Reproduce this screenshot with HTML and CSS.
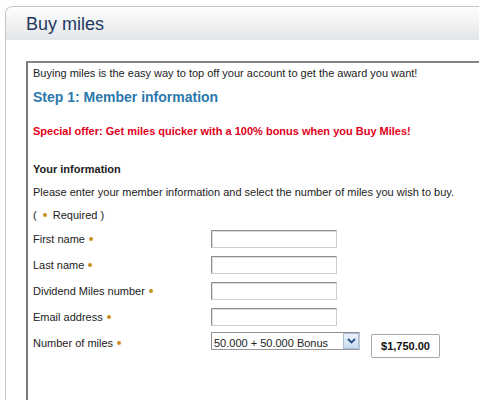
FILE: index.html
```html
<!DOCTYPE html>
<html>
<head>
<meta charset="utf-8">
<link rel="stylesheet" href="styles.css">
</head>
<body>
<div class="panel">
  <div class="panel-head"><h1 class="title">Buy miles</h1></div>
  <div class="panel-body">
    <div class="box">
      <p class="intro">Buying miles is the easy way to top off your account to get the award you want!</p>
      <h2 class="step">Step 1: Member information</h2>
      <p class="offer">Special offer: Get miles quicker with a 100% bonus when you Buy Miles!</p>
      <h3 class="sub">Your information</h3>
      <p class="text">Please enter your member information and select the number of miles you wish to buy.</p>
      <p class="text req">( <span class="dot"></span> Required )</p>
      <div class="form">
        <label class="lbl">First name <span class="dot"></span></label>
        <div class="field"><span class="input"></span></div>
        <label class="lbl">Last name <span class="dot"></span></label>
        <div class="field"><span class="input"></span></div>
        <label class="lbl">Dividend Miles number <span class="dot"></span></label>
        <div class="field"><span class="input"></span></div>
        <label class="lbl">Email address <span class="dot"></span></label>
        <div class="field"><span class="input"></span></div>
        <label class="lbl">Number of miles <span class="dot"></span></label>
        <div class="field field-top">
          <div class="select">
            <span class="select-text">50.000 + 50.000 Bonus</span>
            <span class="arrow"><svg width="9" height="6" viewBox="0 0 9 6"><path d="M1 1 L4.5 4.5 L8 1" fill="none" stroke="#2a4f86" stroke-width="1.8"/></svg></span>
          </div>
          <div class="price">$1,750.00</div>
        </div>
      </div>
    </div>
  </div>
</div>
</body>
</html>
```
FILE: styles.css
```css
html, body {
  margin: 0;
  padding: 0;
  background: #fff;
  overflow: hidden;
  height: 100%;
}
body {
  font-family: "Liberation Sans", Arial, sans-serif;
  color: #222;
  font-size: 11px;
  padding: 6px 0 0 5px;
  box-sizing: border-box;
}
.panel {
  height: 100%;
  box-sizing: border-box;
  border: 1px solid #c4c4c4;
  border-right: none;
  border-bottom: none;
  border-top-left-radius: 8px;
  display: flex;
  flex-direction: column;
}
.panel-head {
  height: 33px;
  flex: none;
  background: linear-gradient(#fdfdfd, #e3e6e9);
  border-top-left-radius: 7px;
  padding-left: 20px;
  display: flex;
  align-items: center;
}
.title {
  margin: 0;
  font-size: 18px;
  font-weight: normal;
  color: #22385f;
  line-height: 22px;
}
.panel-body {
  flex: 1;
  padding: 21px 0 0 20px;
  display: flex;
  flex-direction: column;
  min-height: 0;
}
.box {
  flex: 1;
  border-top: 2px solid #858585;
  border-left: 2px solid #7a7a7a;
  padding: 3px 0 0 5px;
  overflow: hidden;
}
p, h2, h3 { margin: 0; }
.intro, .text, .offer, .sub {
  line-height: 14px;
}
.step {
  margin-top: 9px;
  font-size: 14px;
  line-height: 17px;
  color: #2b78ab;
  font-weight: bold;
}
.offer {
  margin-top: 18px;
  color: #e2001a;
  font-weight: bold;
}
.sub {
  margin-top: 24px;
  font-weight: bold;
  font-size: 11px;
}
.text { margin-top: 9px; }
.dot {
  display: inline-block;
  width: 4px;
  height: 4px;
  border-radius: 50%;
  background: #c8901e;
  vertical-align: middle;
  margin: 0 1px;
  position: relative;
  top: -1px;
}
.req .dot { margin: 0 3px; }
.form {
  margin-top: 4px;
  display: grid;
  grid-template-columns: 178px auto;
  grid-auto-rows: 26px;
  align-items: center;
}
.lbl { line-height: 14px; }
.field { display: flex; align-items: center; }
.input {
  display: block;
  width: 126px;
  height: 18px;
  box-sizing: border-box;
  border: 1px solid;
  border-color: #8f8f8f #cfcfcf #cfcfcf #8f8f8f;
  box-shadow: inset 1px 1px 0 #dcdcdc;
  background: #fff;
}
.field-top { align-items: flex-start; margin-top: 4px; }
.select {
  width: 149px;
  height: 18px;
  box-sizing: border-box;
  border: 1px solid;
  border-color: #8f8f8f #c8c8c8 #9a9a9a #8f8f8f;
  display: flex;
  align-items: center;
  background: #fff;
}
.select-text {
  flex: 1;
  padding-left: 2px;
  font-size: 11px;
  line-height: 14px;
  margin-top: 3px;
}
.arrow {
  width: 16px;
  height: 16px;
  box-sizing: border-box;
  border: 1px solid #a9bfd9;
  background: linear-gradient(#eaf2fb, #c9dcf1);
  display: flex;
  align-items: center;
  justify-content: center;
}
.price {
  margin: 2px 0 0 11px;
  width: 69px;
  height: 24px;
  box-sizing: border-box;
  border: 1px solid #a8a8a8;
  border-radius: 2px;
  font-weight: bold;
  display: flex;
  align-items: center;
  justify-content: center;
  color: #111;
}
```
